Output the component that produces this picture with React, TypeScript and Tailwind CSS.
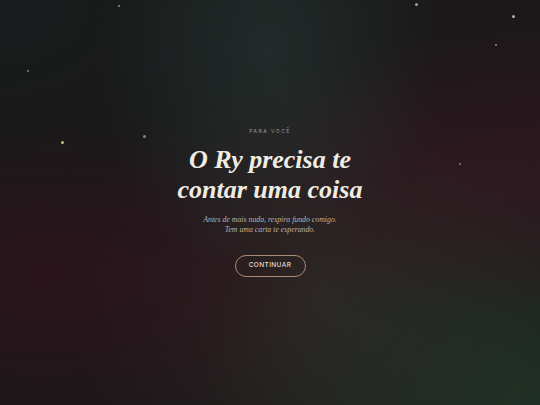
import React from 'react';

const stars = [
  { x: 118, y: 5, s: 'w-[2px] h-[2px] bg-[#8a9692]' },
  { x: 415, y: 3, s: 'w-[3px] h-[3px] bg-[#9aa09c]' },
  { x: 512, y: 15, s: 'w-[3px] h-[3px] bg-[#b4b2ae]' },
  { x: 495, y: 44, s: 'w-[2px] h-[2px] bg-[#8f8c8c]' },
  { x: 27, y: 70, s: 'w-[2px] h-[2px] bg-[#7f8a88]' },
  { x: 61, y: 141, s: 'w-[3px] h-[3px] bg-[#c8b48a]' },
  { x: 143, y: 135, s: 'w-[3px] h-[3px] bg-[#7d8886]' },
  { x: 459, y: 163, s: 'w-[2px] h-[2px] bg-[#8d7f86]' },
];

export default function App() {
  return (
    <div className="relative w-full h-[405px] overflow-hidden bg-[#1b1819] bg-[radial-gradient(ellipse_at_50%_12%,rgba(40,62,58,0.5),transparent_45%),radial-gradient(ellipse_at_100%_42%,rgba(70,22,38,0.45),transparent_45%),radial-gradient(ellipse_at_8%_68%,rgba(58,14,30,0.5),transparent_40%),radial-gradient(ellipse_at_98%_100%,rgba(38,72,50,0.5),transparent_45%),radial-gradient(ellipse_at_58%_72%,rgba(78,56,52,0.35),transparent_55%),radial-gradient(ellipse_at_0%_0%,rgba(20,30,30,0.5),transparent_40%)]">
      {/* stars */}
      {stars.map((st, i) => (
        <span
          key={i}
          className={`absolute rounded-full ${st.s}`}
          style={{ left: st.x, top: st.y }}
        />
      ))}

      <div className="flex flex-col items-center justify-center h-full text-center">
        <p className="font-['Inter',sans-serif] text-[5px] tracking-[0.3em] text-[#a39d93] mb-[9px]">
          PARA VOCÊ
        </p>
        <h1 className="font-['Liberation_Serif',serif] italic font-bold text-[26px] leading-[30px] text-[#f1ece2]">
          O Ry precisa te
          <br />
          contar uma coisa
        </h1>
        <p className="mt-[10px] font-['Liberation_Serif',serif] italic text-[7.8px] leading-[10px] text-[#bab3a8]">
          Antes de mais nada, respira fundo comigo.
          <br />
          Tem uma carta te esperando.
        </p>
        <button className="mt-[20px] w-[71px] h-[22px] rounded-full border border-[#a88b72] font-['Inter',sans-serif] text-[6.5px] font-medium tracking-[0.06em] text-[#e3dbcf]">
          CONTINUAR
        </button>
      </div>
    </div>
  );
}
